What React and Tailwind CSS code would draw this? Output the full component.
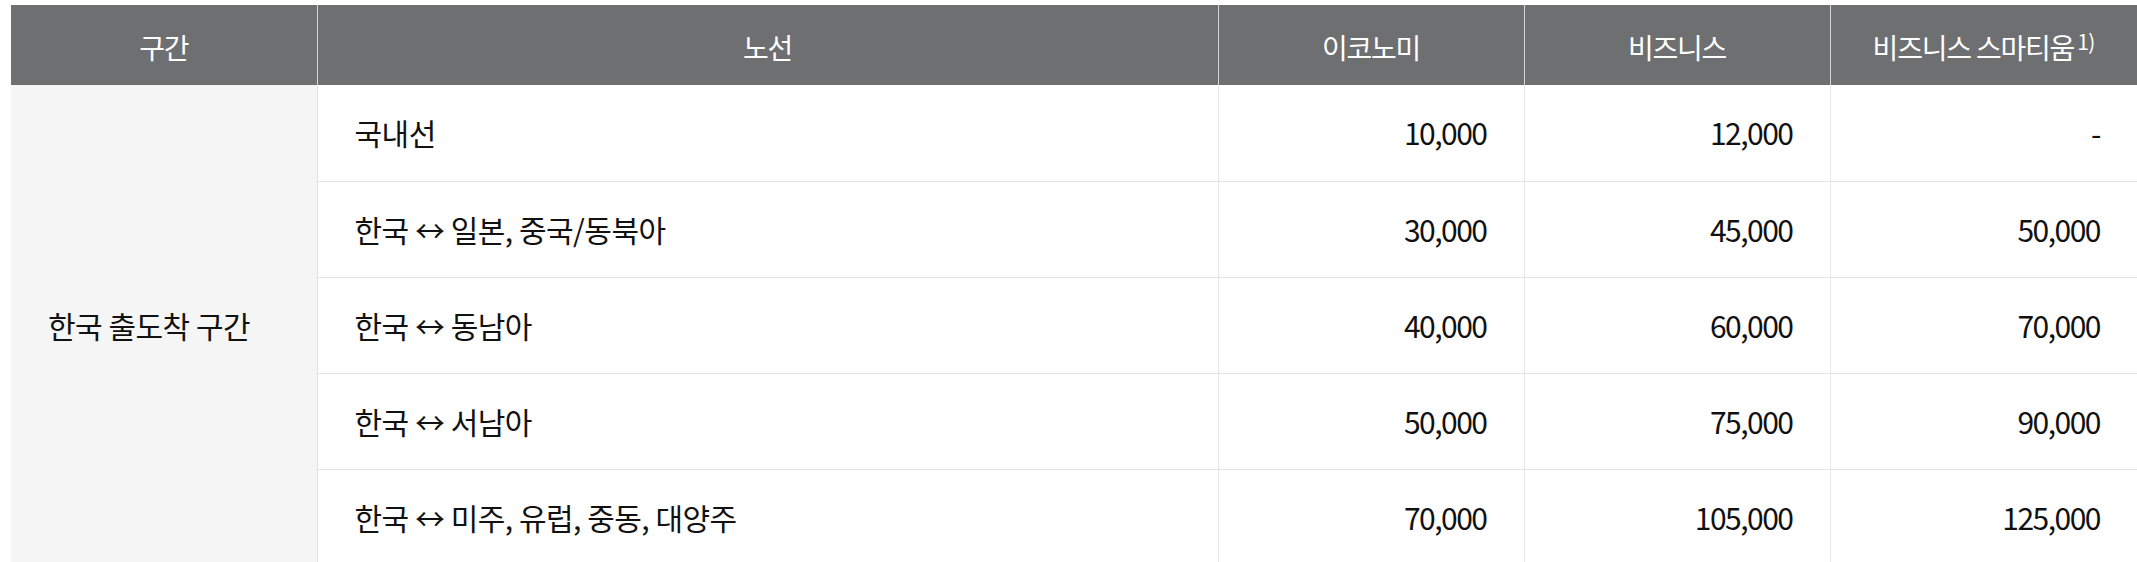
import React from 'react';

// --- Data ---
const COLUMNS = [
  { key: 'section', label: '구간', width: 'w-[306px]' },
  { key: 'route', label: '노선', width: 'w-[901px]' },
  { key: 'economy', label: '이코노미', width: 'w-[306px]' },
  { key: 'business', label: '비즈니스', width: 'w-[306px]' },
  { key: 'smartium', label: '비즈니스 스마티움', width: 'w-[307px]', note: '1)' },
];

const ROWS = [
  { route: '국내선', economy: '10,000', business: '12,000', smartium: '-' },
  { route: '한국 ↔ 일본, 중국/동북아', economy: '30,000', business: '45,000', smartium: '50,000' },
  { route: '한국 ↔ 동남아', economy: '40,000', business: '60,000', smartium: '70,000' },
  { route: '한국 ↔ 서남아', economy: '50,000', business: '75,000', smartium: '90,000' },
  { route: '한국 ↔ 미주, 유럽, 중동, 대양주', economy: '70,000', business: '105,000', smartium: '125,000' },
];

const FONT = "font-['Noto_Sans_CJK_KR','Noto_Sans',sans-serif]";

const App = () => {
  const last = ROWS.length - 1;

  return (
    <div className={`bg-white min-h-screen pt-[5px] pl-[11px] ${FONT}`}>
      <table className="table-fixed border-collapse w-[2126px] text-[30px] tracking-[-0.5px] text-[#111]">
        <thead>
          <tr className="bg-[#6e6f71] h-[80px]">
            {COLUMNS.map((col, i) => (
              <th
                key={col.key}
                className={`${col.width} pt-[3px] font-normal text-white text-[28px] tracking-[-1.2px] text-center align-middle ${i > 0 ? 'border-l border-[#d4d4d4]' : ''}`}
              >
                {col.label}
                {col.note && <sup className="text-[21px] relative -top-[9px] ml-[3px] tracking-[-0.5px]">{col.note}</sup>}
              </th>
            ))}
          </tr>
        </thead>
        <tbody>
          {ROWS.map((row, i) => (
            <tr key={row.route} className="h-[96px]">
              {i === 0 && (
                <td
                  rowSpan={ROWS.length}
                  className="bg-[#f5f5f5] align-middle pl-[37px] border-r border-[#e1e1e1]"
                >
                  한국 출도착 구간
                </td>
              )}
              <td className={`pl-[37px] align-middle ${i < last ? 'border-b border-[#e1e1e1]' : ''}`}>
                {row.route}
              </td>
              {[row.economy, row.business, row.smartium].map((value, j) => (
                <td
                  key={j}
                  className={`pr-[37px] text-right align-middle tracking-[-1.5px] border-l border-[#e8e8e8] ${i < last ? 'border-b border-b-[#e1e1e1]' : ''}`}
                >
                  {value}
                </td>
              ))}
            </tr>
          ))}
        </tbody>
      </table>
    </div>
  );
};

export default App;
